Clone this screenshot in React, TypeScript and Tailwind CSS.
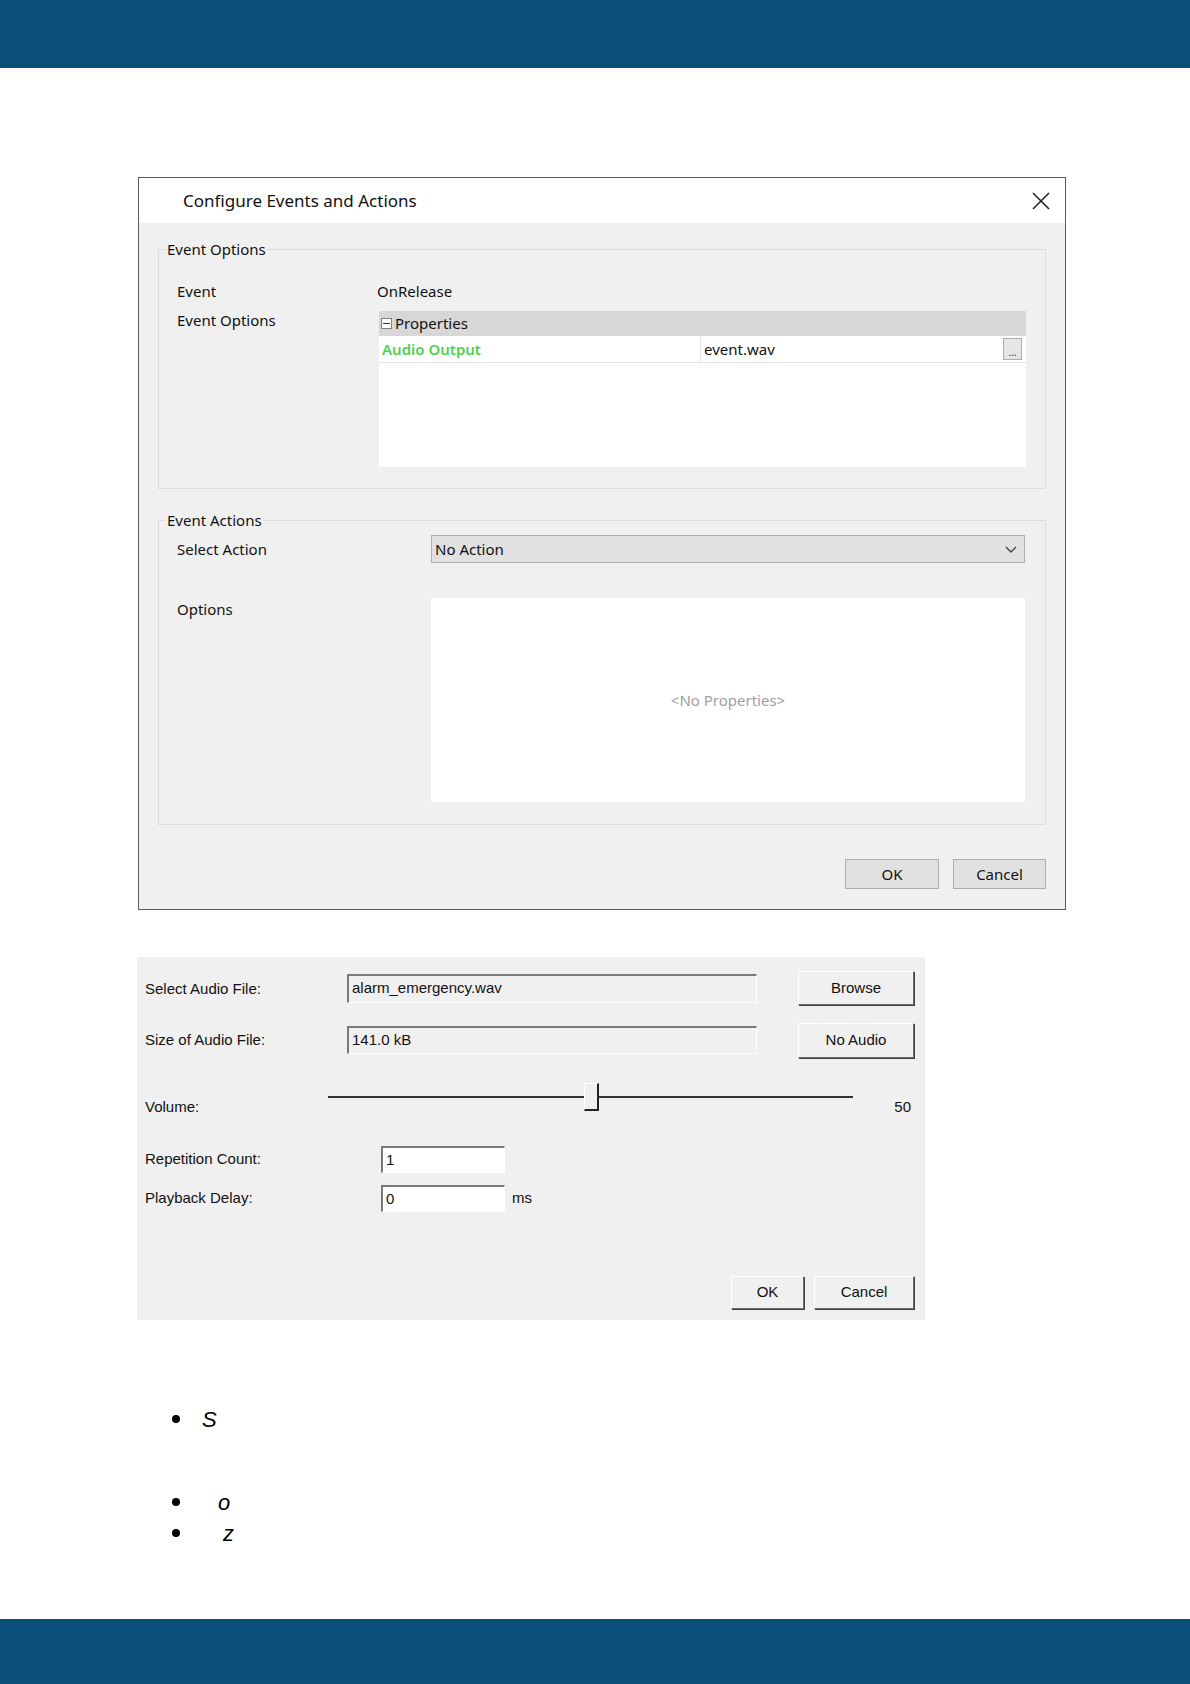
import { ReactNode } from 'react';

// ── WIN10 PIECES ──
function WinBtn({ children, className = '' }: { children: ReactNode; className?: string }) {
  return (
    <div className={`flex items-center justify-center h-[30px] bg-[#e1e1e1] border border-[#adadad] text-[15px] text-[#111] ${className}`}>
      {children}
    </div>
  );
}

function GroupBox({ title, className = '', children }: { title: string; className?: string; children: ReactNode }) {
  return (
    <div className={`relative border border-[#dcdcdc] ${className}`}>
      <span className="absolute -top-[12px] left-[7px] px-[1px] bg-[#f0f0f0] text-[15px] leading-[22px] text-[#111]">{title}</span>
      {children}
    </div>
  );
}

// ── CLASSIC PIECES ──
function SunkenField({ value, white = false, className = '' }: { value: string; white?: boolean; className?: string }) {
  return (
    <div
      className={`flex items-center pl-[3px] border-t-2 border-l-2 border-t-[#7a7a7a] border-l-[#7a7a7a] border-b border-r border-b-white border-r-white text-[15px] text-[#111] ${white ? 'bg-white' : 'bg-[#f0f0f0]'} ${className}`}
    >
      {value}
    </div>
  );
}

function ClassicBtn({ children, className = '' }: { children: ReactNode; className?: string }) {
  return (
    <div className={`flex items-center justify-center bg-[#f0f0f0] border border-t-white border-l-white border-b-[#6e6e6e] border-r-[#6e6e6e] shadow-[1px_1px_0_#404040] text-[15px] text-[#111] ${className}`}>
      {children}
    </div>
  );
}

function ConfigureDialog() {
  return (
    <div className="ml-[138px] w-[928px] h-[733px] border border-[#5a5a5a] bg-[#f0f0f0] flex flex-col font-['Noto_Sans',sans-serif]">
      <div className="h-[45px] bg-white flex items-center justify-between pl-[44px] pr-[15px]">
        <span className="text-[17px] text-[#111]">Configure Events and Actions</span>
        <svg width="18" height="18" viewBox="0 0 18 18" className="text-[#222]">
          <path d="M1 1 L17 17 M17 1 L1 17" stroke="currentColor" strokeWidth="1.6" fill="none" />
        </svg>
      </div>

      <div className="flex-1 px-[19px] pt-[26px] pb-[20px] flex flex-col">
        <GroupBox title="Event Options" className="h-[240px] pl-[18px] pr-[19px] pt-[28px] pb-[21px]">
          <div className="grid grid-cols-[202px_1fr] text-[15px] text-[#111] h-full">
            <div className="leading-[26px]">Event</div>
            <div className="leading-[26px] -ml-[2px]">OnRelease</div>
            <div className="leading-[30px] mt-[1px]">Event Options</div>
            <div className="mt-[7px] bg-white flex flex-col h-[156px]">
              <div className="h-[25px] bg-[#d7d7d7] flex items-center pl-[2px] gap-[3px]">
                <span className="w-[11px] h-[11px] border border-[#808080] bg-white flex items-center justify-center">
                  <span className="w-[7px] h-[1px] bg-[#333]" />
                </span>
                <span>Properties</span>
              </div>
              <div className="h-[27px] flex border-b border-[#e3e3e3]">
                <div className="w-[322px] border-r border-[#e3e3e3] pl-[3px] flex items-center text-[#4fd24f] font-semibold">Audio Output</div>
                <div className="flex-1 flex items-center pl-[3px] pr-[4px] justify-between">
                  <span>event.wav</span>
                  <span className="w-[19px] h-[22px] border border-[#adadad] bg-[#e6e6e6] text-[10px] text-[#333] flex items-end justify-center leading-[14px]">...</span>
                </div>
              </div>
            </div>
          </div>
        </GroupBox>

        <GroupBox title="Event Actions" className="mt-[31px] h-[305px] pl-[18px] pr-[20px] pt-[14px] pb-[22px]">
          <div className="grid grid-cols-[254px_1fr] text-[15px] text-[#111]">
            <div className="leading-[28px]">Select Action</div>
            <div className="h-[28px] bg-[#e1e1e1] border border-[#adadad] flex items-center justify-between pl-[3px] pr-[6px]">
              <span>No Action</span>
              <svg width="14" height="10" viewBox="0 0 14 10">
                <path d="M2 3 L7 8 L12 3" stroke="#444" strokeWidth="1.4" fill="none" />
              </svg>
            </div>
            <div className="mt-[33px] leading-[26px]">Options</div>
            <div className="mt-[35px] h-[204px] bg-white flex items-center justify-center text-[#a0a0a0]">&lt;No Properties&gt;</div>
          </div>
        </GroupBox>

        <div className="mt-auto flex justify-end gap-[14px]">
          <WinBtn className="w-[94px]">OK</WinBtn>
          <WinBtn className="w-[93px]">Cancel</WinBtn>
        </div>
      </div>
    </div>
  );
}

function AudioDialog() {
  return (
    <div className="mt-[47px] ml-[137px] w-[788px] h-[363px] bg-[#f0f0f0] pl-[8px] pr-[11px] pt-[16px] pb-[11px] flex flex-col font-['Liberation_Sans',Arial,sans-serif] text-[15px] text-[#111]">
      <div className="flex items-center h-[30px]">
        <span className="w-[202px] pt-[3px]">Select Audio File:</span>
        <SunkenField value="alarm_emergency.wav" className="w-[410px] h-[29px]" />
        <ClassicBtn className="ml-auto w-[116px] h-[34px]">Browse</ClassicBtn>
      </div>
      <div className="flex items-center h-[30px] mt-[22px]">
        <span className="w-[202px]">Size of Audio File:</span>
        <SunkenField value="141.0 kB" className="w-[410px] h-[28px]" />
        <ClassicBtn className="ml-auto w-[116px] h-[35px]">No Audio</ClassicBtn>
      </div>
      <div className="flex items-center h-[30px] mt-[28px]">
        <span className="w-[183px] pt-[18px]">Volume:</span>
        <div className="relative w-[525px] h-[30px]">
          <div className="absolute left-0 right-0 top-[13px] h-[2px] bg-[#333]" />
          <div className="absolute left-[256px] top-0 w-[15px] h-[28px] bg-[#f0f0f0] border-r-2 border-b-2 border-r-[#222] border-b-[#222] border-l border-t border-l-white border-t-white" />
          <div className="absolute left-0 w-[256px] top-[13px] h-[2px] bg-[#333]" />
        </div>
        <span className="ml-auto mr-[3px] pt-[18px]">50</span>
      </div>
      <div className="flex items-center h-[27px] mt-[33px]">
        <span className="w-[236px]">Repetition Count:</span>
        <SunkenField value="1" white className="w-[124px] h-[27px]" />
      </div>
      <div className="flex items-center h-[27px] mt-[12px]">
        <span className="w-[236px]">Playback Delay:</span>
        <SunkenField value="0" white className="w-[124px] h-[27px]" />
        <span className="ml-[7px]">ms</span>
      </div>
      <div className="mt-auto flex justify-end gap-[10px]">
        <ClassicBtn className="w-[73px] h-[33px]">OK</ClassicBtn>
        <ClassicBtn className="w-[100px] h-[33px]">Cancel</ClassicBtn>
      </div>
    </div>
  );
}

export default function App() {
  return (
    <div className="w-[1190px] min-h-[1684px] bg-white flex flex-col">
      <div className="h-[68px] bg-[#0a4f7a]" />
      <div className="pt-[109px]">
        <ConfigureDialog />
        <AudioDialog />
        <ul className="mt-[84px] ml-[172px] text-[22px] italic text-black font-['Liberation_Sans',Arial,sans-serif]">
          <li className="flex items-center h-[30px]">
            <span className="w-[8px] h-[8px] rounded-full bg-black" />
            <span className="ml-[22px]">S</span>
          </li>
          <li className="flex items-center h-[30px] mt-[53px]">
            <span className="w-[8px] h-[8px] rounded-full bg-black" />
            <span className="ml-[38px]">o</span>
          </li>
          <li className="flex items-center h-[30px] mt-[1px]">
            <span className="w-[8px] h-[8px] rounded-full bg-black" />
            <span className="ml-[43px]">z</span>
          </li>
        </ul>
      </div>
      <div className="mt-auto h-[65px] bg-[#0a4f7a]" />
    </div>
  );
}
